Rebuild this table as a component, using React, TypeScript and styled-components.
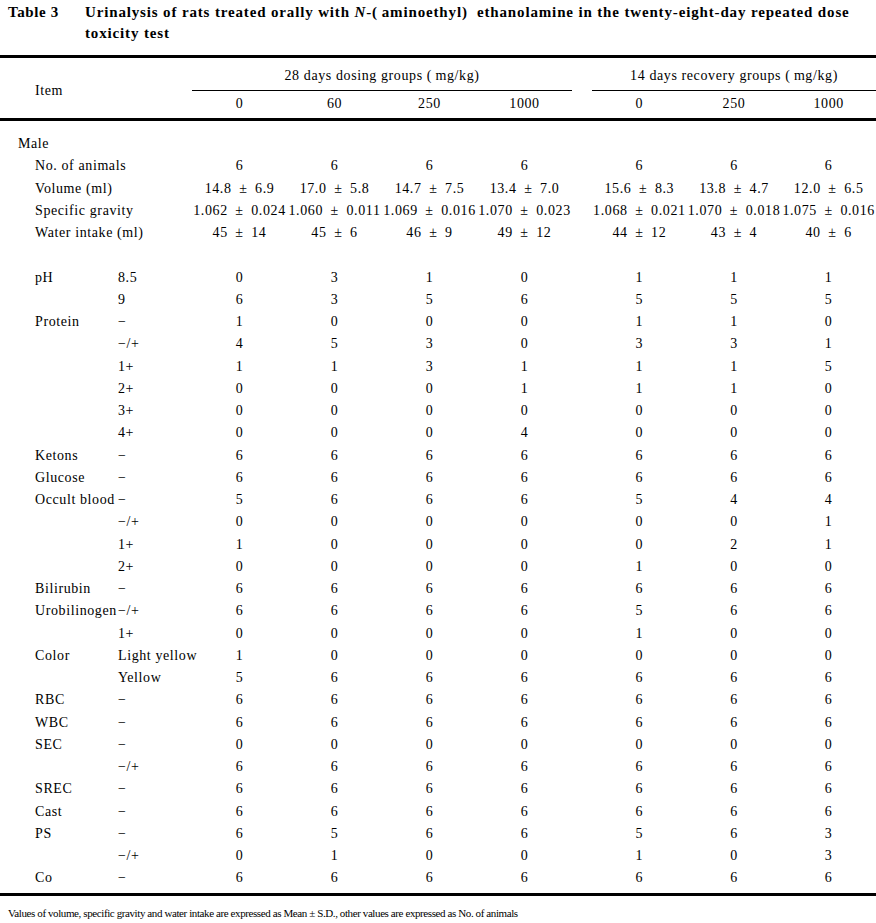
import React from 'react';
import styled, { createGlobalStyle } from 'styled-components';

const GlobalStyle = createGlobalStyle`
    html, body {
        margin: 0;
        padding: 0;
        background: #ffffff;
    }
    body {
        font-family: "Liberation Serif", "Times New Roman", serif;
        color: #000000;
    }
`;

const StyledPage = styled.div`
    width: 876px;
`;

const StyledCaption = styled.div`
    display: flex;
    padding: 2px 0 0 8px;
    height: 55px;
    box-sizing: border-box;
    font-size: 15px;
    font-weight: 700;
    line-height: 21px;
`;

const StyledCaptionLabel = styled.div`
    flex: 0 0 77px;
    letter-spacing: 0.6px;
`;

const StyledCaptionText = styled.div`
    flex: 1 1 auto;
    letter-spacing: 0.85px;
`;

const StyledTable = styled.table`
    width: 876px;
    table-layout: fixed;
    border-collapse: collapse;
    font-size: 14px;
    letter-spacing: 0.6px;
    border-top: 3px solid #000;
    border-bottom: 3px solid #000;
`;

const StyledHeadCell = styled.th<{ $underline?: boolean; $align?: string }>`
    font-weight: 400;
    padding: 0;
    text-align: ${p => p.$align || 'center'};
    vertical-align: top;
    line-height: 18px;
    ${p => (p.$underline ? 'border-bottom: 1px solid #000;' : '')}
`;

const StyledItemHead = styled(StyledHeadCell)`
    && {
        padding-left: 35px;
        padding-top: 24px;
    }
`;

const StyledGroupRow = styled.tr`
    height: 34px;
    & > th {
        padding-top: 9px;
    }
`;

const StyledDoseRow = styled.tr`
    height: 29px;
    border-bottom: 3px solid #000;
    & > th {
        padding-top: 4px;
    }
`;

const StyledRow = styled.tr<{ $first?: boolean; $last?: boolean }>`
    & > td {
        height: 22.25px;
        line-height: 22.25px;
        padding: 0;
        padding-top: ${p => (p.$first ? '12px' : '0')};
        padding-bottom: ${p => (p.$last ? '3px' : '0')};
        white-space: pre;
    }
`;

const StyledLabel = styled.td<{ $indent: number }>`
    padding-left: ${p => p.$indent}px !important;
    text-align: left;
    overflow: visible;
`;

const StyledSubLabel = styled.td`
    padding-left: 2px !important;
    text-align: left;
`;

const StyledValue = styled.td`
    text-align: center;
    word-spacing: 3.5px;
`;

const StyledNote = styled.p`
    margin: 0;
    padding: 9px 0 0 8px;
    font-size: 11px;
    line-height: 16px;
    letter-spacing: -0.4px;
`;

interface IRow {
    item?: string;
    sub?: string;
    dose?: string[];
    rec?: string[];
    section?: boolean;
}

const pm = (a: string, b: string) => `${a} ± ${b}`;
const n = (s: string) => s.split('');

const rows: IRow[] = [
    { item: 'Male', section: true },
    { item: 'No. of animals', dose: n('6666'), rec: n('666') },
    {
        item: 'Volume (ml)',
        dose: [pm('14.8', '6.9'), pm('17.0', '5.8'), pm('14.7', '7.5'), pm('13.4', '7.0')],
        rec: [pm('15.6', '8.3'), pm('13.8', '4.7'), pm('12.0', '6.5')],
    },
    {
        item: 'Specific gravity',
        dose: [pm('1.062', '0.024'), pm('1.060', '0.011'), pm('1.069', '0.016'), pm('1.070', '0.023')],
        rec: [pm('1.068', '0.021'), pm('1.070', '0.018'), pm('1.075', '0.016')],
    },
    {
        item: 'Water intake (ml)',
        dose: [pm('45', '14'), pm('45', '6'), pm('46', '9'), pm('49', '12')],
        rec: [pm('44', '12'), pm('43', '4'), pm('40', '6')],
    },
    {},
    { item: 'pH', sub: '8.5', dose: n('0310'), rec: n('111') },
    { sub: '9', dose: n('6356'), rec: n('555') },
    { item: 'Protein', sub: '−', dose: n('1000'), rec: n('110') },
    { sub: '−/+', dose: n('4530'), rec: n('331') },
    { sub: '1+', dose: n('1131'), rec: n('115') },
    { sub: '2+', dose: n('0001'), rec: n('110') },
    { sub: '3+', dose: n('0000'), rec: n('000') },
    { sub: '4+', dose: n('0004'), rec: n('000') },
    { item: 'Ketons', sub: '−', dose: n('6666'), rec: n('666') },
    { item: 'Glucose', sub: '−', dose: n('6666'), rec: n('666') },
    { item: 'Occult blood', sub: '−', dose: n('5666'), rec: n('544') },
    { sub: '−/+', dose: n('0000'), rec: n('001') },
    { sub: '1+', dose: n('1000'), rec: n('021') },
    { sub: '2+', dose: n('0000'), rec: n('100') },
    { item: 'Bilirubin', sub: '−', dose: n('6666'), rec: n('666') },
    { item: 'Urobilinogen', sub: '−/+', dose: n('6666'), rec: n('566') },
    { sub: '1+', dose: n('0000'), rec: n('100') },
    { item: 'Color', sub: 'Light yellow', dose: n('1000'), rec: n('000') },
    { sub: 'Yellow', dose: n('5666'), rec: n('666') },
    { item: 'RBC', sub: '−', dose: n('6666'), rec: n('666') },
    { item: 'WBC', sub: '−', dose: n('6666'), rec: n('666') },
    { item: 'SEC', sub: '−', dose: n('0000'), rec: n('000') },
    { sub: '−/+', dose: n('6666'), rec: n('666') },
    { item: 'SREC', sub: '−', dose: n('6666'), rec: n('666') },
    { item: 'Cast', sub: '−', dose: n('6666'), rec: n('666') },
    { item: 'PS', sub: '−', dose: n('6566'), rec: n('563') },
    { sub: '−/+', dose: n('0100'), rec: n('103') },
    { item: 'Co', sub: '−', dose: n('6666'), rec: n('666') },
];

const dosing = ['0', '60', '250', '1000'];
const recovery = ['0', '250', '1000'];

const App: React.FC = () => (
    <StyledPage>
        <GlobalStyle />
        <StyledCaption>
            <StyledCaptionLabel>Table 3</StyledCaptionLabel>
            <StyledCaptionText>
                Urinalysis of rats treated orally with <i>N</i>-(&#8201;aminoethyl)&nbsp; ethanolamine in the
                twenty-eight-day repeated dose
                <br />
                toxicity test
            </StyledCaptionText>
        </StyledCaption>
        <StyledTable>
            <colgroup>
                <col style={{ width: 116 }} />
                <col style={{ width: 76 }} />
                {dosing.map(d => (
                    <col key={`d${d}`} style={{ width: 95 }} />
                ))}
                <col style={{ width: 20 }} />
                {recovery.map(r => (
                    <col key={`r${r}`} />
                ))}
            </colgroup>
            <thead>
                <StyledGroupRow>
                    <StyledItemHead colSpan={2} rowSpan={2} $align="left">
                        Item
                    </StyledItemHead>
                    <StyledHeadCell colSpan={4} $underline>
                        28 days dosing groups (&#8201;mg/kg)
                    </StyledHeadCell>
                    <StyledHeadCell />
                    <StyledHeadCell colSpan={3} $underline>
                        14 days recovery groups (&#8201;mg/kg)
                    </StyledHeadCell>
                </StyledGroupRow>
                <StyledDoseRow>
                    {dosing.map(d => (
                        <StyledHeadCell key={`hd${d}`}>{d}</StyledHeadCell>
                    ))}
                    <StyledHeadCell />
                    {recovery.map(r => (
                        <StyledHeadCell key={`hr${r}`}>{r}</StyledHeadCell>
                    ))}
                </StyledDoseRow>
            </thead>
            <tbody>
                {rows.map((row, i) => (
                    <StyledRow key={i} $first={i === 0} $last={i === rows.length - 1}>
                        {row.section ? (
                            <StyledLabel $indent={18} colSpan={2}>
                                {row.item}
                            </StyledLabel>
                        ) : row.sub === undefined ? (
                            <StyledLabel $indent={35} colSpan={2}>
                                {row.item || ''}
                            </StyledLabel>
                        ) : (
                            <>
                                <StyledLabel $indent={35}>{row.item || ''}</StyledLabel>
                                <StyledSubLabel>{row.sub}</StyledSubLabel>
                            </>
                        )}
                        {dosing.map((d, j) => (
                            <StyledValue key={`v${d}`}>{row.dose ? row.dose[j] : ''}</StyledValue>
                        ))}
                        <StyledValue />
                        {recovery.map((r, j) => (
                            <StyledValue key={`w${r}`}>{row.rec ? row.rec[j] : ''}</StyledValue>
                        ))}
                    </StyledRow>
                ))}
            </tbody>
        </StyledTable>
        <StyledNote>
            Values of volume, specific gravity and water intake are expressed as Mean ± S.D., other values are
            expressed as No. of animals
        </StyledNote>
    </StyledPage>
);

export default App;
